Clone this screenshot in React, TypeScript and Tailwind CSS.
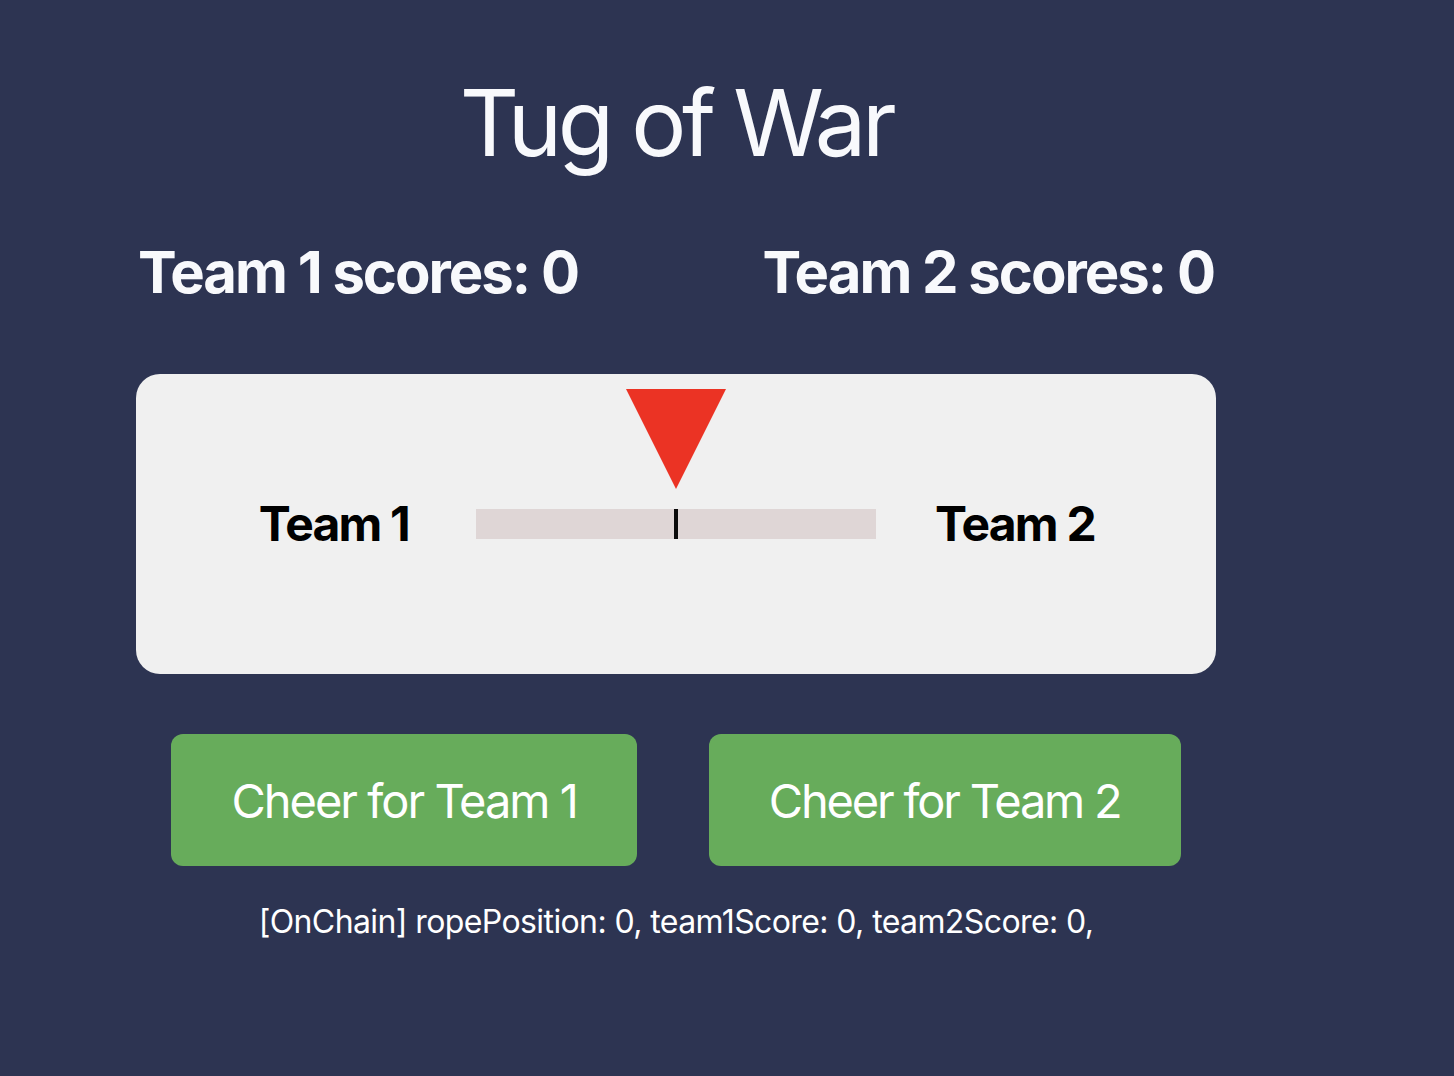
import { useState } from "react";

const App = () => {
  const [ropePosition, setRopePosition] = useState(0);
  const [team1Score, setTeam1Score] = useState(0);
  const [team2Score, setTeam2Score] = useState(0);

  // marker offset in px from the middle of the rope bar
  const offset = ropePosition * 20;

  return (
    <div className="min-h-screen bg-[#2d3452] font-['Inter','Liberation_Sans',sans-serif] text-[#f8f9fc]">
      <div className="ml-[136px] w-[1080px] pt-[77px] flex flex-col items-center">
        <h1 className="text-[92px] leading-[92px] font-normal tracking-[-4.4px]">Tug of War</h1>

        <div className="mt-[74px] w-full flex justify-between px-[2px]">
          <h2 className="text-[58px] leading-[58px] font-bold tracking-[-2px]">Team 1 scores: {team1Score}</h2>
          <h2 className="text-[58px] leading-[58px] font-bold tracking-[-2px]">Team 2 scores: {team2Score}</h2>
        </div>

        <div className="mt-[73px] w-full h-[300px] rounded-[24px] bg-[#f0f0f0] grid grid-cols-[1fr_400px_1fr] items-center gap-[64px] text-black">
          <span className="justify-self-end mr-[3px] text-[48px] leading-[48px] font-bold tracking-[-1.8px]">Team 1</span>
          <div className="relative w-[400px] h-[30px] bg-[#dfd6d6]">
            <div
              className="absolute top-0 h-full w-[4px] -ml-[2px] bg-[#0b0b0b]"
              style={{ left: `calc(50% + ${offset}px)` }}
            />
            <div
              className="absolute bottom-full mb-[20px] -ml-[50px]"
              style={{ left: `calc(50% + ${offset}px)` }}
            >
              <svg width="100" height="100" viewBox="0 0 100 100">
                <polygon points="0,0 100,0 50,100" fill="#eb3324" />
              </svg>
            </div>
          </div>
          <span className="justify-self-start -ml-[5px] text-[48px] leading-[48px] font-bold tracking-[-1.8px]">Team 2</span>
        </div>

        <div className="mt-[60px] flex gap-[72px]">
          <button
            onClick={() => {
              setTeam1Score(team1Score + 1);
              setRopePosition(ropePosition - 1);
            }}
            className="h-[132px] px-[60px] rounded-[12px] bg-[#67ac5b] text-white text-[47px] leading-[47px] tracking-[-2px]"
          >
            Cheer for Team 1
          </button>
          <button
            onClick={() => {
              setTeam2Score(team2Score + 1);
              setRopePosition(ropePosition + 1);
            }}
            className="h-[132px] px-[60px] rounded-[12px] bg-[#67ac5b] text-white text-[47px] leading-[47px] tracking-[-2.2px]"
          >
            Cheer for Team 2
          </button>
        </div>

        <p className="mt-[40px] text-[32px] leading-[32px] tracking-[-0.6px] text-white">
          [OnChain] ropePosition: {ropePosition}, team1Score: {team1Score}, team2Score: {team2Score},
        </p>
      </div>
    </div>
  );
};

export default App;
